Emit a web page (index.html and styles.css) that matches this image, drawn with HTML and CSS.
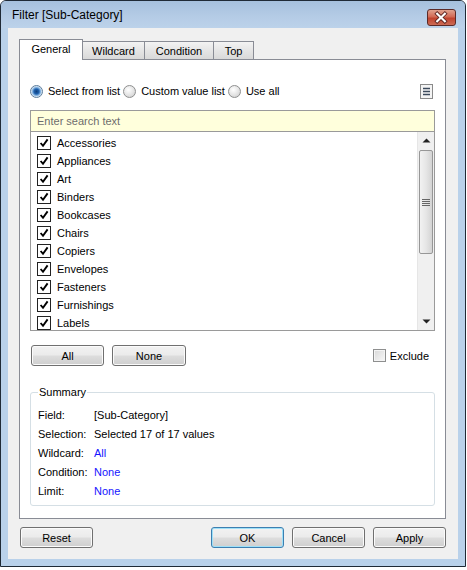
FILE: index.html
```html
<!DOCTYPE html>
<html>
<head>
<meta charset="utf-8">
<link rel="stylesheet" href="styles.css">
</head>
<body>
<div class="window">
  <div class="titlebar">
    <span class="title">Filter [Sub-Category]</span>
    <div class="close">
      <svg width="29" height="17" viewBox="0 0 29 17">
        <path d="M10.5 4.5 L18.5 12.5 M18.5 4.5 L10.5 12.5" stroke="#5a2320" stroke-width="4" stroke-linecap="square"/>
        <path d="M10.5 4.5 L18.5 12.5 M18.5 4.5 L10.5 12.5" stroke="#ffffff" stroke-width="2.2" stroke-linecap="square"/>
      </svg>
    </div>
  </div>
  <div class="client">
    <div class="tabs">
      <div class="tab active t-general">General</div>
      <div class="tab t-wildcard">Wildcard</div>
      <div class="tab t-condition">Condition</div>
      <div class="tab t-top">Top</div>
    </div>
    <div class="panel">
      <div class="radio-row">
        <label class="radio-opt"><span class="radio on"></span>Select from list</label>
        <label class="radio-opt"><span class="radio"></span>Custom value list</label>
        <label class="radio-opt"><span class="radio"></span>Use all</label>
        <span class="menu-btn">
          <svg width="13" height="15" viewBox="0 0 13 15">
            <rect x="0.5" y="0.5" width="12" height="14" fill="#f4f4f4" stroke="#8a8a8a"/>
            <path d="M3 4.5 H10 M3 7.5 H10 M3 10.5 H10" stroke="#3c4a5c" stroke-width="1.6"/>
          </svg>
        </span>
      </div>
      <div class="search">Enter search text</div>
      <div class="list">
        <div class="items">
          <div class="item"><span class="cb"></span>Accessories</div>
          <div class="item"><span class="cb"></span>Appliances</div>
          <div class="item"><span class="cb"></span>Art</div>
          <div class="item"><span class="cb"></span>Binders</div>
          <div class="item"><span class="cb"></span>Bookcases</div>
          <div class="item"><span class="cb"></span>Chairs</div>
          <div class="item"><span class="cb"></span>Copiers</div>
          <div class="item"><span class="cb"></span>Envelopes</div>
          <div class="item"><span class="cb"></span>Fasteners</div>
          <div class="item"><span class="cb"></span>Furnishings</div>
          <div class="item"><span class="cb"></span>Labels</div>
        </div>
        <div class="scrollbar">
          <div class="arrow"><svg width="9" height="5" viewBox="0 0 9 5"><path d="M0.5 4.5 L4.5 0.5 L8.5 4.5 Z" fill="#222"/></svg></div>
          <div class="track">
            <div class="thumb">
              <svg width="8" height="9" viewBox="0 0 8 9"><path d="M0 1.5 H8 M0 3.5 H8 M0 5.5 H8 M0 7.5 H8" stroke="#666" stroke-width="1"/></svg>
            </div>
          </div>
          <div class="arrow"><svg width="9" height="5" viewBox="0 0 9 5"><path d="M0.5 0.5 L4.5 4.5 L8.5 0.5 Z" fill="#222"/></svg></div>
        </div>
      </div>
      <div class="list-actions">
        <button class="btn">All</button>
        <button class="btn">None</button>
        <label class="exclude"><span class="cb-empty"></span>Exclude</label>
      </div>
      <fieldset class="summary">
        <legend>Summary</legend>
        <div class="srow"><span class="lbl">Field:</span><span>[Sub-Category]</span></div>
        <div class="srow"><span class="lbl">Selection:</span><span>Selected 17 of 17 values</span></div>
        <div class="srow"><span class="lbl">Wildcard:</span><span class="link">All</span></div>
        <div class="srow"><span class="lbl">Condition:</span><span class="link">None</span></div>
        <div class="srow"><span class="lbl">Limit:</span><span class="link">None</span></div>
      </fieldset>
    </div>
    <div class="footer">
      <button class="btn">Reset</button>
      <div class="spacer"></div>
      <button class="btn default">OK</button>
      <button class="btn">Cancel</button>
      <button class="btn">Apply</button>
    </div>
  </div>
</div>
</body>
</html>
```

FILE: styles.css
```css
* { box-sizing: border-box; }
html, body { margin: 0; padding: 0; background: #ffffff; }
body {
  font-family: "Liberation Sans", Arial, sans-serif;
  font-size: 11px;
  color: #000;
}
.window {
  width: 466px;
  height: 567px;
  border: 1px solid #1f2a36;
  border-radius: 6px 6px 0 0;
  background: #b9d1ea;
  display: flex;
  flex-direction: column;
  overflow: hidden;
}
.titlebar {
  height: 27px;
  flex: none;
  display: flex;
  align-items: center;
  padding: 0 9px 0 11px;
  background: linear-gradient(#a6c0dd, #b5cce6 60%, #bcd2ea);
}
.title {
  font-size: 12px;
  flex: 1;
  padding-top: 1px;
  color: #000;
}
.close {
  width: 29px;
  height: 17px;
  margin-top: 5px;
  border: 1px solid #5c2a27;
  border-radius: 3px;
  background: linear-gradient(#e0a28f, #d26a55 45%, #c0432e 55%, #cc6b55);
  display: flex;
  align-items: center;
  justify-content: center;
  overflow: hidden;
}
.close svg { display: block; margin-left: -1px; }
.client {
  margin: 0 7px 7px 7px;
  flex: 1;
  background: #f0f0f0;
  padding: 11px 12px 0 11px;
  display: flex;
  flex-direction: column;
}
.tabs {
  display: flex;
  align-items: flex-end;
  height: 20px;
  position: relative;
  z-index: 1;
}
.tab {
  height: 18px;
  border: 1px solid #898c95;
  border-bottom: none;
  background: linear-gradient(#f3f3f3, #e5e5e5 50%, #d9d9d9);
  display: flex;
  align-items: center;
  justify-content: center;
  margin-right: -1px;
  padding-top: 1px;
}
.tab.active {
  height: 21px;
  margin-bottom: -1px;
  background: #ffffff;
  border-color: #898c95;
  padding-top: 0;
  padding-bottom: 2px;
}
.t-general { width: 64px; }
.t-wildcard { width: 63px; }
.t-condition { width: 70px; }
.t-top { width: 41px; }
.panel {
  height: 460px;
  flex: none;
  border: 1px solid #898c95;
  background: #ffffff;
  padding: 0 10px;
  display: flex;
  flex-direction: column;
}
.radio-row {
  margin-top: 23px;
  height: 16px;
  display: flex;
  align-items: center;
  padding-left: 0;
}
.radio-opt {
  display: flex;
  align-items: center;
  margin-right: 3px;
}
.radio {
  width: 13px;
  height: 13px;
  border-radius: 50%;
  border: 1px solid #8e8f8f;
  background: radial-gradient(circle at 40% 35%, #ffffff, #e3e3e3 55%, #c9c9c9);
  margin-right: 5px;
  position: relative;
}
.radio.on {
  border-color: #5c7d9c;
  background: radial-gradient(circle, #0d3e7c 0, #1e60ad 2.5px, #7fb0e0 4px, #e6eef6 5.5px, #f4f4f4 7px);
}
.menu-btn {
  margin-left: auto;
  margin-right: 2px;
  display: flex;
  margin-top: 1px;
}
.menu-btn svg { display: block; }
.search {
  margin-top: 11px;
  height: 22px;
  border: 1px solid #9a9a9a;
  background: #ffffdc;
  color: #6d6d6d;
  padding-left: 6px;
  display: flex;
  align-items: center;
}
.list {
  height: 199px;
  border: 1px solid #9a9a9a;
  border-top: none;
  display: flex;
}
.items {
  flex: 1;
  padding-top: 2px;
  overflow: hidden;
}
.item {
  height: 18px;
  display: flex;
  align-items: center;
  padding-left: 6px;
}
.cb {
  width: 14px;
  height: 14px;
  border: 1px solid #222;
  background: #fff url("data:image/svg+xml;utf8,<svg xmlns='http://www.w3.org/2000/svg' width='12' height='12' viewBox='0 0 12 12'><path d='M2.6 6 L5 8.8 L9.6 2.4' fill='none' stroke='black' stroke-width='1.9'/></svg>") center/12px 12px no-repeat;
  margin-right: 6px;
}
.scrollbar {
  width: 17px;
  display: flex;
  flex-direction: column;
  background: #f0f0f0;
  border-left: 1px solid #e6e6e6;
}
.arrow {
  height: 17px;
  display: flex;
  align-items: center;
  justify-content: center;
}
.arrow svg { display: block; }
.track { flex: 1; padding-top: 1px; }
.thumb {
  height: 104px;
  margin: 0 1px 0 1px;
  border: 1px solid #979797;
  border-radius: 2px;
  background: linear-gradient(90deg, #f2f2f2, #e6e6e6 50%, #d4d4d4);
  display: flex;
  align-items: center;
  justify-content: center;
}
.thumb svg { display: block; }
.list-actions {
  margin-top: 14px;
  height: 21px;
  display: flex;
  align-items: center;
  padding-left: 1px;
}
.btn {
  font-family: "Liberation Sans", Arial, sans-serif;
  font-size: 11px;
  color: #000;
  width: 73px;
  height: 21px;
  border: 1px solid #707070;
  border-radius: 3px;
  background: linear-gradient(#f2f2f2, #ebebeb 48%, #dddddd 52%, #cfcfcf);
  box-shadow: inset 0 0 0 1px #fbfbfb;
  padding: 0;
  margin: 0;
}
.list-actions .btn + .btn { margin-left: 8px; width: 74px; }
.exclude {
  margin-left: auto;
  margin-right: 6px;
  display: flex;
  align-items: center;
}
.cb-empty {
  width: 13px;
  height: 13px;
  border: 1px solid #8e8f8f;
  background: linear-gradient(135deg, #d8d8d8, #f8f8f8);
  box-shadow: inset 0 0 0 1px #f4f4f4;
  margin-right: 4px;
}
.summary {
  margin: 20px 0 0 0;
  padding: 7px 6px 4px 7px;
  border: 1px solid #d5dfe5;
  border-radius: 3px;
  min-width: 0;
}
.summary legend {
  padding: 0 1px;
  margin-left: 0;
}
.srow {
  height: 19.2px;
  display: flex;
  align-items: center;
}
.lbl { width: 56px; flex: none; }
.link { color: #1515ff; }
.footer {
  margin-top: 8px;
  display: flex;
  gap: 8px;
  padding-left: 1px;
}
.spacer { flex: 1; }
.btn.default {
  border-color: #3c7fb1;
  box-shadow: inset 0 0 0 1px #9ee0f8;
}
```
